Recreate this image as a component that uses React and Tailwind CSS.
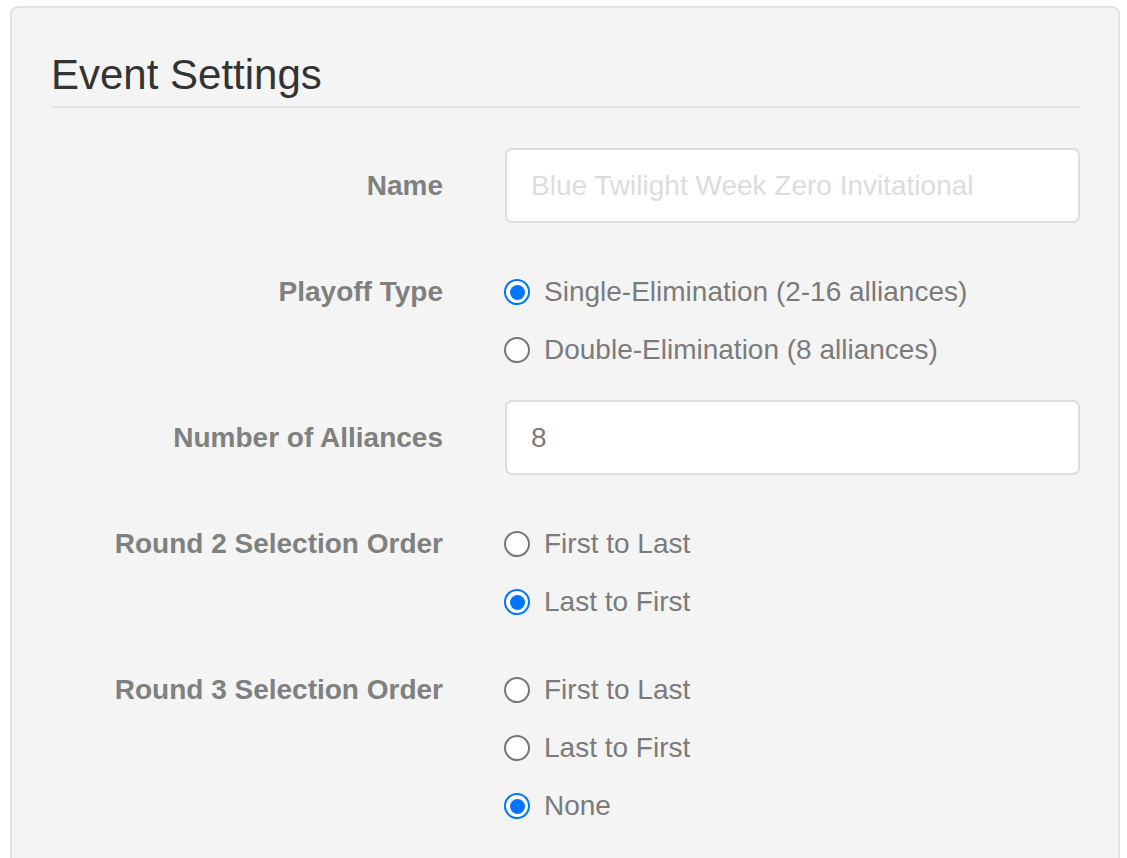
import React from "react";

function Radio({ checked, label }) {
  return (
    <div className="flex h-[42px] items-center">
      {checked ? (
        <div className="flex h-[26px] w-[26px] items-center justify-center rounded-full border-[2.5px] border-[#0075ff] bg-white">
          <div className="h-[15px] w-[15px] rounded-full bg-[#0075ff]" />
        </div>
      ) : (
        <div className="h-[26px] w-[26px] rounded-full border-2 border-[#767676] bg-white" />
      )}
      <span className="ml-[14px] text-[28px] leading-[42px] text-[#7b7b7b]">{label}</span>
    </div>
  );
}

function Label({ children }) {
  return (
    <div className="w-[392px] shrink-0 text-right text-[28px] font-bold leading-[42px] text-[#808080]">
      {children}
    </div>
  );
}

function InputRow({ label, value, placeholder, className }) {
  return (
    <div className={"flex items-center " + className}>
      <Label>{label}</Label>
      <div className="ml-[62px] flex h-[75px] w-[575px] items-center rounded-[7px] border-2 border-[#dddddd] bg-white px-[24px]">
        {value ? (
          <span className="text-[28px] text-[#7b7b7b]">{value}</span>
        ) : (
          <span className="text-[28px] text-[#dcdcdc]">{placeholder}</span>
        )}
      </div>
    </div>
  );
}

function RadioGroup({ label, options, className }) {
  return (
    <div className={"flex items-start " + className}>
      <Label>{label}</Label>
      <div className="ml-[61px] flex flex-col gap-[16px]">
        {options.map((o) => (
          <Radio key={o.label} checked={o.checked} label={o.label} />
        ))}
      </div>
    </div>
  );
}

export default function App() {
  return (
    <div
      className="h-[858px] w-[1127px] overflow-hidden bg-white pl-[10px] pt-[6px]"
      style={{ fontFamily: '"Liberation Sans", Arial, sans-serif' }}
    >
      <div className="h-[900px] w-[1110px] rounded-[8px] border-2 border-[#e3e3e3] bg-[#f4f4f4] pl-[39px] pr-[38px] pt-[43px]">
        <div className="border-b-2 border-[#e4e4e4] pb-[7px] text-[42px] leading-[48px] text-[#333333]">
          Event Settings
        </div>
        <InputRow
          className="mt-[40px]"
          label="Name"
          placeholder="Blue Twilight Week Zero Invitational"
        />
        <RadioGroup
          className="mt-[48px]"
          label="Playoff Type"
          options={[
            { label: "Single-Elimination (2-16 alliances)", checked: true },
            { label: "Double-Elimination (8 alliances)", checked: false },
          ]}
        />
        <InputRow className="mt-[29px]" label="Number of Alliances" value="8" />
        <RadioGroup
          className="mt-[48px]"
          label="Round 2 Selection Order"
          options={[
            { label: "First to Last", checked: false },
            { label: "Last to First", checked: true },
          ]}
        />
        <RadioGroup
          className="mt-[46px]"
          label="Round 3 Selection Order"
          options={[
            { label: "First to Last", checked: false },
            { label: "Last to First", checked: false },
            { label: "None", checked: true },
          ]}
        />
      </div>
    </div>
  );
}
